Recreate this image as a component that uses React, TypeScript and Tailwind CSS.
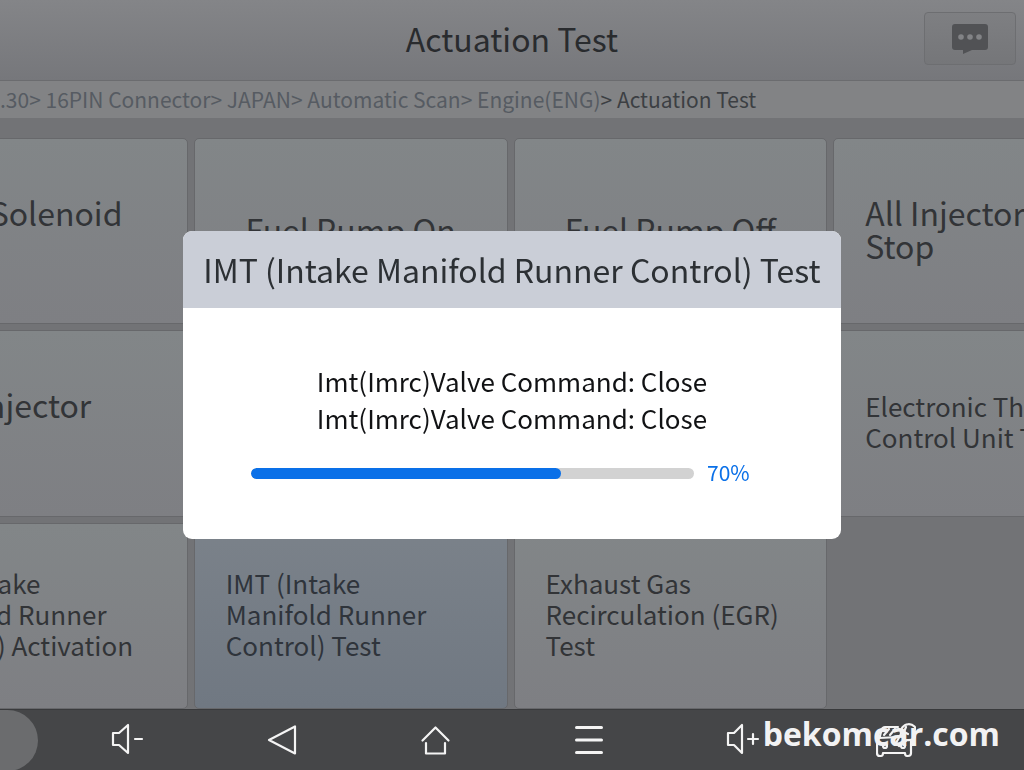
import { clsx } from "clsx";
import type { ReactNode } from "react";

type Tile = { lines: string[]; size: "lg" | "sm"; active?: boolean };

const tiles: Tile[] = [
  { lines: ["EVAP Solenoid", "On"], size: "lg" },
  { lines: ["Fuel Pump On"], size: "lg" },
  { lines: ["Fuel Pump Off"], size: "lg" },
  { lines: ["All Injectors", "Stop"], size: "lg" },
  { lines: ["Fuel Injector", "Off"], size: "lg" },
  { lines: [], size: "lg" },
  { lines: [], size: "lg" },
  { lines: ["Electronic Throttle", "Control Unit Test"], size: "sm" },
  { lines: ["IMT (Intake", "Manifold Runner", "Control) Activation"], size: "sm" },
  { lines: ["IMT (Intake", "Manifold Runner", "Control) Test"], size: "sm", active: true },
  { lines: ["Exhaust Gas", "Recirculation (EGR)", "Test"], size: "sm" },
];

const crumbs = [".30", "16PIN Connector", "JAPAN", "Automatic Scan", "Engine(ENG)"];

const messages = ["Imt(Imrc)Valve Command: Close", "Imt(Imrc)Valve Command: Close"];

const progress = 70;

const Header = () => (
  <header className="relative flex h-[81px] items-center justify-center border-b border-[#6b6c6f] bg-linear-to-b from-[#848588] to-[#76777b] pb-1">
    <h1 className="text-[32px] leading-10 text-[#292b2e]">Actuation Test</h1>
    <button
      type="button"
      aria-label="Feedback"
      className="absolute top-3 right-2 flex h-[53px] w-[92px] items-center justify-center rounded-sm border border-[#6d6e71] bg-linear-to-b from-[#7e7f82] to-[#757679]"
    >
      <svg viewBox="0 0 36 30" className="h-[30px] w-9" aria-hidden="true">
        <path
          d="M3 0h30a3 3 0 0 1 3 3v20a3 3 0 0 1-3 3H20l-9 4v-4H3a3 3 0 0 1-3-3V3a3 3 0 0 1 3-3z"
          fill="#515255"
        />
        <g fill="#828386">
          <circle cx="9" cy="13" r="2.8" />
          <circle cx="18" cy="13" r="2.8" />
          <circle cx="27" cy="13" r="2.8" />
        </g>
      </svg>
    </button>
  </header>
);

const Breadcrumb = () => (
  <nav
    aria-label="Breadcrumb"
    className="flex h-[37px] items-center overflow-hidden bg-[#828385] pb-0.5 text-[21px] leading-8 whitespace-pre text-[#565b62]"
  >
    {crumbs.map((crumb, i) => (
      <a key={crumb} href="#">
        {crumb}
        <span className={clsx(i === crumbs.length - 1 && "text-[#3c3f43]")}>&gt; </span>
      </a>
    ))}
    <span className="text-[#3c3f43]">Actuation Test</span>
  </nav>
);

const TileButton = ({ lines, size, active }: Tile) => (
  <button
    type="button"
    className={clsx(
      "flex items-center rounded-[5px] border border-[#67686b] bg-linear-to-b px-[31px] pb-1 text-left",
      size === "lg" ? "text-[32px] leading-[33px]" : "text-[26px] leading-[31px]",
      lines.length === 1 && "justify-center",
      active
        ? "from-[#7b828a] to-[#707882] text-[#2f343b]"
        : "from-[#828688] to-[#7e7f83] text-[#323437]",
    )}
  >
    <span className="whitespace-nowrap">
      {lines.map((line) => (
        <span key={line} className="block">
          {line}
        </span>
      ))}
    </span>
  </button>
);

const NavButton = ({ label, children }: { label: string; children: ReactNode }) => (
  <button type="button" aria-label={label} className="flex items-center justify-center">
    <svg
      viewBox="0 0 40 40"
      className="size-10"
      fill="none"
      stroke="#f4f4f4"
      strokeWidth="2.2"
      strokeLinecap="round"
      strokeLinejoin="round"
      aria-hidden="true"
    >
      {children}
    </svg>
  </button>
);

const BottomBar = () => (
  <footer className="relative h-[61px] overflow-hidden border-t border-[#393a3c] bg-[#454648]">
    <div className="absolute top-0 left-0 h-[61px] w-[38px] rounded-r-full bg-[#6b6c6e]" />
    <nav aria-label="System" className="grid h-full grid-cols-6 px-[51px]">
      <NavButton label="Volume down">
        <path d="M5 13h6l9-8v28l-9-8H5zM27 19h7" />
      </NavButton>
      <NavButton label="Back">
        <path d="M8 20 34 6.500v27z" />
      </NavButton>
      <NavButton label="Home">
        <path d="M7.500 20.500 20.500 7.500l13 13M11 23v10.500h19V23" />
      </NavButton>
      <NavButton label="Menu">
        <path d="M7.500 7.500h25M7.500 20h25M7.500 32.500h25" strokeWidth="3" />
      </NavButton>
      <NavButton label="Volume up">
        <path d="M6 13h6l8-8v28l-8-8H6zM26 19h10M31 14v10" />
      </NavButton>
      <NavButton label="Vehicle">
        <path d="M22 7H9Q6.500 7 5.500 10L3.500 18Q1 20 1 23v10q0 3 3 3h1q2 0 2-3h22q0 3 2 3h1q3 0 3-3V21" />
        <path d="M3 18l20-1M13 9l-5 6M19 9l-5 6" />
        <circle cx="9" cy="26" r="2" />
        <circle cx="27" cy="26" r="2" />
        <path d="M25 14a8 8 0 1 1 6 6l-8 6-3-3z" />
        <path d="M30 7l-2 5 4 2" />
      </NavButton>
    </nav>
    <div className="absolute top-1 right-6 font-['Open_Sans',sans-serif] text-[32px] leading-10 font-bold text-[#f2f2f3]">
      bekomcar.com
    </div>
  </footer>
);

const ProgressDialog = () => (
  <div className="fixed inset-0 flex items-center justify-center px-4">
    <section
      role="dialog"
      aria-modal="true"
      aria-labelledby="dialog-title"
      className="w-full max-w-[658px] overflow-hidden rounded-[9px] bg-white"
    >
      <h2
        id="dialog-title"
        className="bg-[#caced7] py-[18px] text-center text-[32px] leading-[41px] text-[#2c3034]"
      >
        IMT (Intake Manifold Runner Control) Test
      </h2>
      <div className="px-[68px] pt-[54px] pb-[50px]">
        <div className="text-center text-[26px] leading-[37px] text-[#111214]">
          {messages.map((message, i) => (
            <p key={i}>{message}</p>
          ))}
        </div>
        <div className="mt-[22px] flex items-center gap-[13px]">
          <div
            role="progressbar"
            aria-label="Test progress"
            aria-valuenow={progress}
            aria-valuemin={0}
            aria-valuemax={100}
            className="h-[11px] flex-1 overflow-hidden rounded-full bg-[#d2d2d2]"
          >
            <div className="h-full rounded-full bg-[#0a70e8]" style={{ width: `${progress}%` }} />
          </div>
          <span className="w-[66px] pb-[3px] text-[21px] leading-7 text-[#0a70e8]">{progress}%</span>
        </div>
      </div>
    </section>
  </div>
);

export default function App() {
  return (
    <div className="flex min-h-screen flex-col overflow-hidden bg-[#727376] font-['Noto_Sans_CJK_SC',sans-serif]">
      <Header />
      <Breadcrumb />
      <main className="-mr-[123px] -ml-[126px] grid flex-1 grid-cols-4 grid-rows-3 gap-1.5 pt-5">
        {tiles.map((tile, i) => (
          <TileButton key={i} {...tile} />
        ))}
      </main>
      <BottomBar />
      <ProgressDialog />
    </div>
  );
}
